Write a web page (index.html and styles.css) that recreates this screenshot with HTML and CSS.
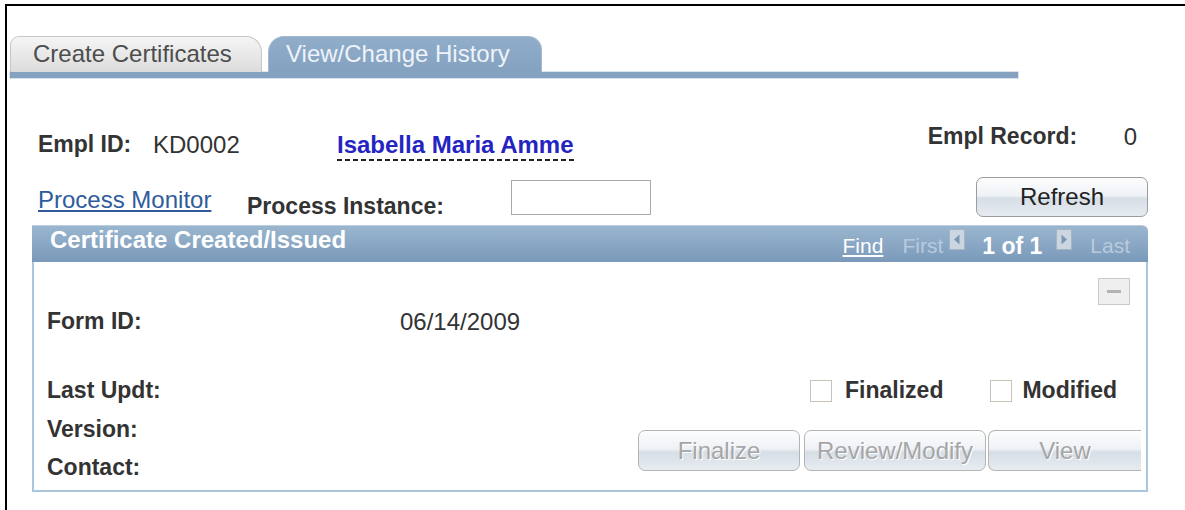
FILE: index.html
```html
<!DOCTYPE html>
<html lang="en">
<head>
<meta charset="utf-8">
<title>View/Change History</title>
<link rel="stylesheet" href="styles.css">
</head>
<body>
<div class="frame">
  <div class="tabs">
    <div class="tab">Create Certificates</div>
    <div class="tab tab-active">View/Change History</div>
  </div>
  <div class="tab-rule"></div>

  <div class="page">
    <div class="id-row">
      <div class="id-left">
        <span class="lbl w-emplid">Empl ID:</span>
        <span class="val w-kd">KD0002</span>
        <span class="name">Isabella Maria Amme</span>
      </div>
      <div class="id-right">
        <span class="lbl w-rec">Empl Record:</span>
        <span class="val">0</span>
      </div>
    </div>

    <div class="proc-row">
      <a class="link w-pm" href="#">Process Monitor</a>
      <span class="lbl w-pi">Process Instance:</span>
      <input class="field" type="text" aria-label="Process Instance">
      <button class="btn btn-refresh" type="button">Refresh</button>
    </div>

    <div class="scroll">
      <div class="scroll-head">
        <span class="scroll-title">Certificate Created/Issued</span>
        <div class="nav">
          <a class="nav-find" href="#">Find</a>
          <span class="nav-dim nav-first">First</span>
          <span class="arrow arrow-prev">
            <svg width="16" height="21" viewBox="0 0 16 21"><rect x="0.5" y="0.5" width="15" height="20" fill="#cbd6e0" stroke="#a3b6c8"/><path d="M10.5 5.5 L5 10.5 L10.5 15.5 Z" fill="#7b97b5"/></svg>
          </span>
          <span class="nav-count">1 of 1</span>
          <span class="arrow arrow-next">
            <svg width="16" height="21" viewBox="0 0 16 21"><rect x="0.5" y="0.5" width="15" height="20" fill="#cbd6e0" stroke="#a3b6c8"/><path d="M5.5 5.5 L11 10.5 L5.5 15.5 Z" fill="#7b97b5"/></svg>
          </span>
          <span class="nav-dim nav-last">Last</span>
        </div>
      </div>

      <div class="scroll-body">
        <div class="body-tools">
          <button class="collapse" type="button" aria-label="Collapse"><span class="collapse-bar"></span></button>
        </div>

        <div class="form-row">
          <span class="lbl w-form">Form ID:</span>
          <span class="val">06/14/2009</span>
        </div>

        <div class="updt-row">
          <span class="lbl">Last Updt:</span>
          <div class="checks">
            <label class="check"><input type="checkbox" class="box"><span class="lbl">Finalized</span></label>
            <label class="check check-mod"><input type="checkbox" class="box"><span class="lbl">Modified</span></label>
          </div>
        </div>

        <div class="lower">
          <div class="lower-labels">
            <span class="lbl">Version:</span>
            <span class="lbl">Contact:</span>
          </div>
          <div class="actions">
            <button class="btn btn-off b-final" type="button" disabled>Finalize</button>
            <button class="btn btn-off b-review" type="button" disabled>Review/Modify</button>
            <button class="btn btn-off b-view" type="button" disabled>View</button>
          </div>
        </div>
      </div>
    </div>
  </div>
</div>
</body>
</html>
```

FILE: styles.css
```css
body {
  margin: 0;
  background: #fff;
  color: #333;
  font-family: "Liberation Sans", Arial, sans-serif;
}

/* outer page frame: only top and left edges are visible */
.frame {
  box-sizing: border-box;
  height: 506px;
  margin: 4px 0 0 5px;
  border-top: 2px solid #000;
  border-left: 2px solid #000;
  overflow: hidden;
}

/* ---------- tabs ---------- */
.tabs {
  display: flex;
  align-items: flex-end;
  height: 36px;
  margin: 30px 0 0 3px;
}

.tab {
  box-sizing: border-box;
  width: 252px;
  height: 36px;
  padding: 3px 0 0 22px;
  font-size: 24px;
  line-height: 27px;
  color: #4d4d4d;
  background: linear-gradient(#f5f5f5, #dcdcdc);
  border: 1px solid #c6c6c6;
  border-bottom: 0;
  border-radius: 9px 16px 0 0;
}

.tab-active {
  width: 274px;
  margin-left: 6px;
  padding-left: 17px;
  color: #eef3f9;
  background: linear-gradient(#90adca, #84a2c0);
  border-color: #a2b9cf;
  border-radius: 16px 14px 0 0;
}

.tab-rule {
  width: 1008px;
  height: 6px;
  margin-left: 3px;
  background: #84a2c0;
  box-shadow: 0 0 0 1px #dbe4ee;
}

/* ---------- page body ---------- */
.page {
  width: 1116px;
  padding-left: 25px;
}

.lbl {
  font-size: 23px;
  font-weight: bold;
  line-height: 27px;
  color: #333;
}

.val {
  font-size: 24px;
  line-height: 27px;
  color: #333;
}

.id-row {
  display: flex;
  justify-content: space-between;
  margin-top: 45px;
  padding-left: 6px;
}

.id-left {
  display: flex;
  margin-top: 8px;
}

.id-right {
  display: flex;
  margin-right: 11px;
}

.w-emplid { width: 115px; }
.w-kd { width: 184px; }
.w-rec { width: 196px; }

.name {
  padding-bottom: 3px;
  font-size: 24px;
  font-weight: bold;
  line-height: 27px;
  color: #2424c2;
  background: repeating-linear-gradient(90deg, #222 0 5px, transparent 5px 8px) left bottom / 100% 2px no-repeat;
}

.proc-row {
  display: flex;
  align-items: flex-start;
  height: 40px;
  margin-top: 16px;
  padding-left: 6px;
}

.link {
  font-size: 24px;
  line-height: 27px;
  color: #2f5b9c;
  text-decoration: underline;
}

.w-pm {
  width: 209px;
  margin-top: 9px;
}

.w-pi {
  width: 264px;
  margin-top: 16px;
}

.field {
  box-sizing: border-box;
  width: 140px;
  height: 35px;
  margin: 3px 0 0;
  border: 1px solid #aaa;
  background: #fff;
}

/* ---------- buttons ---------- */
.btn {
  box-sizing: border-box;
  padding: 0;
  font-family: inherit;
  font-size: 24px;
  color: #222;
  border: 1px solid #9c9c9c;
  border-radius: 7px;
  background: linear-gradient(#fdfdfe 0%, #eef2f6 46%, #d6dee6 54%, #e7ecf1 100%);
}

.btn-refresh {
  width: 172px;
  height: 40px;
  margin-left: auto;
}

.btn-off {
  height: 41px;
  color: #a6a6a6;
  text-shadow: 1px 1px 0 #fff;
  border-color: #b4b4b4;
}

.b-final { width: 162px; }
.b-review { width: 182px; margin-left: 4px; }
.b-view {
  width: 153px;
  margin-left: 2px;
  border-right: 0;
  border-radius: 7px 0 0 7px;
}

/* ---------- scroll area ---------- */
.scroll {
  margin-top: 8px;
}

.scroll-head {
  box-sizing: border-box;
  display: flex;
  height: 37px;
  border-top: 1px solid #bccfe1;
  border-radius: 0 6px 0 0;
  background: linear-gradient(#9ab6cf, #7a99ba);
  color: #fff;
}

.scroll-title {
  padding-left: 18px;
  font-size: 24px;
  font-weight: bold;
  line-height: 27px;
}

.nav {
  display: flex;
  align-items: flex-start;
  margin-left: auto;
  padding-right: 18px;
  font-size: 21px;
  line-height: 24px;
}

.nav-find,
.nav-dim,
.nav-count {
  margin-top: 8px;
}

.nav-find {
  color: #fff;
  text-decoration: underline;
}

.nav-dim {
  color: #b9cadd;
}

.nav-first { margin-left: 19px; }
.nav-last { margin-left: 18px; }

.nav-count {
  margin-left: 17px;
  font-size: 23px;
  font-weight: bold;
  color: #fff;
}

.arrow {
  display: block;
  height: 21px;
  margin-top: 3px;
}

.arrow svg { display: block; }

.arrow-prev { margin-left: 6px; }
.arrow-next { margin-left: 14px; }

.scroll-body {
  box-sizing: border-box;
  height: 230px;
  border: 2px solid #aac5de;
  border-top: 0;
}

.body-tools {
  display: flex;
  justify-content: flex-end;
  padding: 16px 16px 0 0;
}

.collapse {
  box-sizing: border-box;
  display: flex;
  align-items: center;
  justify-content: center;
  width: 32px;
  height: 27px;
  padding: 0;
  border: 1px solid #c9c9c9;
  background: #efefef;
}

.collapse-bar {
  width: 14px;
  height: 3px;
  background: #b3b3b3;
}

.form-row {
  display: flex;
  margin-top: 3px;
  padding-left: 13px;
}

.w-form { width: 353px; }

.updt-row {
  display: flex;
  align-items: center;
  margin-top: 42px;
  padding-left: 13px;
}

.checks {
  display: flex;
  margin-left: auto;
  margin-right: 29px;
}

.check {
  display: flex;
  align-items: center;
}

.check-mod { margin-left: 47px; }

.box {
  appearance: none;
  box-sizing: border-box;
  width: 22px;
  height: 22px;
  margin: 0 13px 0 0;
  border: 1px solid #c8c2b7;
  background: #fff;
}

.check-mod .box { margin-right: 10px; }

.lower {
  display: flex;
  margin-top: 12px;
  padding-left: 13px;
}

.lower-labels {
  display: flex;
  flex-direction: column;
  gap: 11px;
}

.actions {
  display: flex;
  margin: 14px 5px 0 auto;
}
```
